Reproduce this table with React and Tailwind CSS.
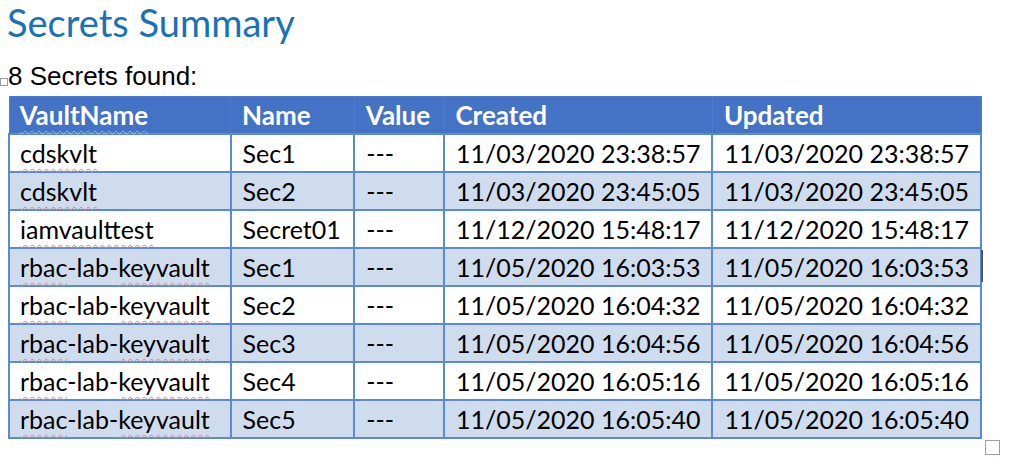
const rows = [
  { vault: "cdskvlt", name: "Sec1", created: "11/03/2020 23:38:57" },
  { vault: "cdskvlt", name: "Sec2", created: "11/03/2020 23:45:05" },
  { vault: "iamvaulttest", name: "Secret01", created: "11/12/2020 15:48:17" },
  { vault: "rbac-lab-keyvault", name: "Sec1", created: "11/05/2020 16:03:53" },
  { vault: "rbac-lab-keyvault", name: "Sec2", created: "11/05/2020 16:04:32" },
  { vault: "rbac-lab-keyvault", name: "Sec3", created: "11/05/2020 16:04:56" },
  { vault: "rbac-lab-keyvault", name: "Sec4", created: "11/05/2020 16:05:16" },
  { vault: "rbac-lab-keyvault", name: "Sec5", created: "11/05/2020 16:05:40" },
];

const wavy = "underline decoration-wavy decoration-[#e88080] decoration-1 underline-offset-[5px]";

function VaultName({ value }) {
  if (value === "rbac-lab-keyvault") {
    return (
      <>
        <span className={wavy}>rbac</span>-lab-<span className={wavy}>keyvault</span>
      </>
    );
  }
  return <span className={wavy}>{value}</span>;
}

export default function App() {
  return (
    <div className="relative w-[1024px] h-[460px] bg-white overflow-hidden font-['Lato',sans-serif] text-black">
      <h1 className="pl-[7px] pt-[0px] text-[38px] leading-[44px] font-normal text-[#1a72b6]">
        Secrets Summary
      </h1>
      <div className="relative mt-[18px] pl-[8px] font-['Liberation_Sans',Arial,sans-serif] text-[26px] leading-[28px]">
        <span className="absolute left-0 top-[16px] w-[8px] h-[8px] border border-gray-400 bg-white" />
        8 Secrets found:
      </div>
      <div className="relative ml-[8px] mt-[6px] w-[974px]">
        <table className="table-fixed border-collapse text-[25px] leading-[34px] whitespace-nowrap">
          <colgroup>
            <col className="w-[223px]" />
            <col className="w-[124px]" />
            <col className="w-[90px]" />
            <col className="w-[268px]" />
            <col className="w-[268px]" />
          </colgroup>
          <thead>
            <tr className="bg-[#4472c4] text-white font-bold h-[37px] text-[26px]">
              <th className="border border-[#4a7bcf] px-[10px] text-left font-bold">
                <span className="underline decoration-wavy decoration-[#a9c0ea] decoration-1 underline-offset-[5px]">
                  VaultName
                </span>
              </th>
              <th className="border border-[#4a7bcf] px-[11px] text-left font-bold">Name</th>
              <th className="border border-[#4a7bcf] px-[11px] text-left font-bold">Value</th>
              <th className="border border-[#4a7bcf] px-[11px] text-left font-bold">Created</th>
              <th className="border border-[#4a7bcf] px-[11px] text-left font-bold">Updated</th>
            </tr>
          </thead>
          <tbody>
            {rows.map((r, i) => (
              <tr key={i} className={`h-[38px] ${i % 2 === 1 ? "bg-[#cfdcee]" : "bg-white"}`}>
                <td className="border-2 border-[#5b8bd5] px-[10px]">
                  <VaultName value={r.vault} />
                </td>
                <td className="border-2 border-[#5b8bd5] px-[11px]">{r.name}</td>
                <td className="border-2 border-[#5b8bd5] px-[11px]">---</td>
                <td className="border-2 border-[#5b8bd5] px-[11px]">{r.created}</td>
                <td className="border-2 border-[#5b8bd5] px-[11px]">{r.created}</td>
              </tr>
            ))}
          </tbody>
        </table>
        <span className="absolute left-[973px] top-[154px] w-[2px] h-[32px] bg-[#555]" />
      </div>
      <span className="absolute left-[985px] top-[440px] w-[15px] h-[15px] border border-gray-400" />
    </div>
  );
}
